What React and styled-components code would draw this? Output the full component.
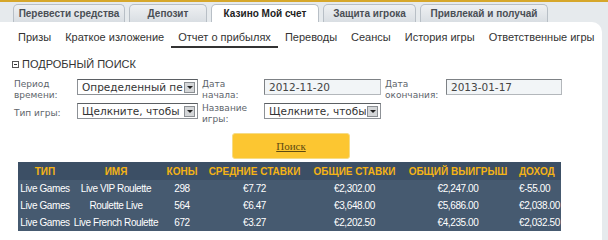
import styled, { createGlobalStyle } from "styled-components";

const GlobalStyle = createGlobalStyle`
  body {
    margin: 0;
    background: #e6eaed;
    font-family: "Liberation Sans", Arial, sans-serif;
  }
`;

const tabs = [
  { label: "Перевести средства", width: 112 },
  { label: "Депозит", width: 78 },
  { label: "Казино Мой счет", width: 108, active: true },
  { label: "Защита игрока", width: 93 },
  { label: "Привлекай и получай", width: 128 },
];

const subLinks = [
  "Призы",
  "Краткое изложение",
  "Отчет о прибылях",
  "Переводы",
  "Сеансы",
  "История игры",
  "Ответственные игры",
];

const rows = [
  ["Live Games", "Live VIP Roulette", "298", "€7.72", "€2,302.00", "€2,247.00", "€-55.00"],
  ["Live Games", "Roulette Live", "564", "€6.47", "€3,648.00", "€5,686.00", "€2,038.00"],
  ["Live Games", "Live French Roulette", "672", "€3.27", "€2,202.50", "€4,235.00", "€2,032.50"],
];

const headers = ["Тип", "Имя", "Коны", "Средние ставки", "Общие ставки", "Общий выигрыш", "Доход"];
const colWidths = [54, 88, 44, 101, 99, 108, 49];

const Page = styled.div`
  width: 608px;
  height: 240px;
  overflow: hidden;
  border-top: 2px solid #d6a72b;
  box-sizing: border-box;
`;

const TabBar = styled.div`
  display: flex;
  align-items: flex-end;
  gap: 4px;
  height: 20px;
  padding-left: 13px;
`;

const Tab = styled.div`
  width: ${(p) => p.$w}px;
  height: 18px;
  box-sizing: border-box;
  border: 1px solid #b8bfc6;
  border-bottom: none;
  border-radius: 5px 5px 0 0;
  background: ${(p) => (p.$active ? "#fff" : "linear-gradient(#eef0f2, #d9dee3)")};
  color: ${(p) => (p.$active ? "#222" : "#4a4f55")};
  font-size: 10px;
  font-weight: bold;
  line-height: 17px;
  text-align: center;
  white-space: nowrap;
`;

const Panel = styled.div`
  margin-right: 6px;
  height: 218px;
  background: #fff;
  border-top-right-radius: 10px;
  padding-top: 7px;
  box-sizing: border-box;
`;

const SubNav = styled.div`
  display: flex;
  padding-left: 11px;
`;

const SubLink = styled.div`
  padding: 0 7px 1px;
  line-height: 16px;
  font-size: 11px;
  color: #333;
  border-bottom: 2px solid ${(p) => (p.$active ? "#333" : "transparent")};
  white-space: nowrap;
`;

const SectionTitle = styled.div`
  display: flex;
  align-items: center;
  gap: 3px;
  margin: 10px 0 0 12px;
  font-size: 11px;
  color: #333;
  line-height: 12px;
`;

const Toggle = styled.span`
  width: 5px;
  height: 5px;
  border: 1px solid #555;
  position: relative;
  &::after {
    content: "";
    position: absolute;
    left: 1px;
    right: 1px;
    top: 2px;
    height: 1px;
    background: #333;
  }
`;

const FormGrid = styled.div`
  display: grid;
  grid-template-columns: 67px 121px 66px 117px 65px 116px;
  grid-auto-rows: 24px;
  margin: 9px 0 0 10px;
  align-items: start;
`;

const Label = styled.div`
  padding-left: 4px;
  font-family: "DejaVu Sans", Verdana, sans-serif;
  font-size: 9px;
  line-height: 11px;
  color: #5d646b;
  margin-top: ${(p) => (p.$single ? "5px" : "0")};
`;

const Select = styled.div`
  display: flex;
  align-items: center;
  min-width: 0;
  height: 16px;
  box-sizing: border-box;
  border: 1px solid #8d9196;
  border-top-color: #5b5f63;
  background: #fff;
  font-family: "DejaVu Sans", Verdana, sans-serif;
  font-size: 10.5px;
  color: #333;
  overflow: hidden;
`;

const SelectText = styled.span`
  flex: 1;
  min-width: 0;
  padding-left: 4px;
  white-space: nowrap;
  overflow: hidden;
`;

const Arrow = styled.span`
  flex: none;
  width: 11px;
  height: 11px;
  margin: 0 2px 0 1px;
  background: #d4d6d8;
  border: 1px solid #8b8f93;
  box-sizing: border-box;
  display: flex;
  align-items: center;
  justify-content: center;
  &::after {
    content: "";
    border-left: 3px solid transparent;
    border-right: 3px solid transparent;
    border-top: 3px solid #222;
  }
`;

const Input = styled.div`
  height: 16px;
  box-sizing: border-box;
  border: 1px solid #b3b7bb;
  border-top-color: #7d8185;
  border-left-color: #7d8185;
  background: #f2f5f7;
  padding-left: 4px;
  font-family: "DejaVu Sans", Verdana, sans-serif;
  font-size: 10.5px;
  line-height: 14px;
  color: #444;
`;

const SearchButton = styled.div`
  margin: 6px 0 0 232px;
  width: 118px;
  height: 26px;
  box-sizing: border-box;
  border: 1px solid #f6dc86;
  border-radius: 3px;
  background: #fcc631;
  display: flex;
  align-items: center;
  justify-content: center;
  font-family: "Liberation Serif", "Times New Roman", serif;
  font-size: 11px;
  color: #5e4a12;
  text-decoration: underline;
`;

const Table = styled.table`
  margin: 3px 0 0 18px;
  width: 543px;
  table-layout: fixed;
  border-collapse: collapse;
  background: #465a70;
`;

const Th = styled.th`
  height: 18px;
  padding: 0;
  background: #3c4f65;
  color: #f4b315;
  font-size: 10px;
  font-weight: bold;
  text-transform: uppercase;
  text-align: ${(p) => (p.$left ? "left" : "center")};
  padding-left: ${(p) => (p.$left ? "7px" : "0")};
  white-space: nowrap;
`;

const Td = styled.td`
  height: 17px;
  padding: 0;
  color: #fff;
  font-family: "Liberation Sans", Arial, sans-serif;
  font-size: 10px;
  letter-spacing: -0.4px;
  text-align: ${(p) => (p.$left ? "left" : "center")};
  padding-left: ${(p) => (p.$left ? "7px" : "0")};
  white-space: nowrap;
`;

export default function App() {
  return (
    <>
      <GlobalStyle />
      <Page>
        <TabBar>
          {tabs.map((t) => (
            <Tab key={t.label} $w={t.width} $active={t.active}>
              {t.label}
            </Tab>
          ))}
        </TabBar>
        <Panel>
          <SubNav>
            {subLinks.map((l) => (
              <SubLink key={l} $active={l === "Отчет о прибылях"}>
                {l}
              </SubLink>
            ))}
          </SubNav>
          <SectionTitle>
            <Toggle />
            ПОДРОБНЫЙ ПОИСК
          </SectionTitle>
          <FormGrid>
            <Label>Период<br />времени:</Label>
            <Select>
              <SelectText>Определенный период</SelectText>
              <Arrow />
            </Select>
            <Label>Дата<br />начала:</Label>
            <Input>2012-11-20</Input>
            <Label>Дата<br />окончания:</Label>
            <Input>2013-01-17</Input>
            <Label $single>Тип игры:</Label>
            <Select>
              <SelectText>Щелкните, чтобы выбрать</SelectText>
              <Arrow />
            </Select>
            <Label>Название<br />игры:</Label>
            <Select>
              <SelectText>Щелкните, чтобы выбрать</SelectText>
              <Arrow />
            </Select>
          </FormGrid>
          <SearchButton>Поиск</SearchButton>
          <Table>
            <colgroup>
              {colWidths.map((w, i) => (
                <col key={i} style={{ width: w }} />
              ))}
            </colgroup>
            <thead>
              <tr>
                {headers.map((h, i) => (
                  <Th key={h} $left={i === 6}>
                    {h}
                  </Th>
                ))}
              </tr>
            </thead>
            <tbody>
              {rows.map((r, ri) => (
                <tr key={ri}>
                  {r.map((c, ci) => (
                    <Td key={ci} $left={ci === 6}>
                      {c}
                    </Td>
                  ))}
                </tr>
              ))}
            </tbody>
          </Table>
        </Panel>
      </Page>
    </>
  );
}
